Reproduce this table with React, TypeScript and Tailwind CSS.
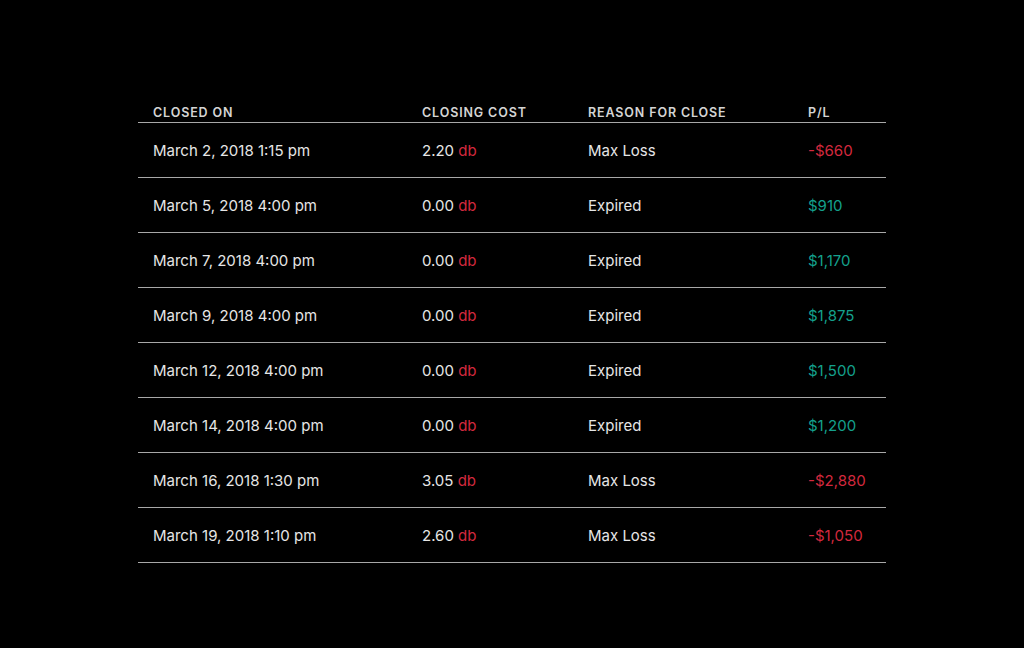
import React from "react";

type Row = { date: string; cost: string; reason: string; pl: string; neg: boolean };

const rows: Row[] = [
  { date: "March 2, 2018 1:15 pm", cost: "2.20", reason: "Max Loss", pl: "-$660", neg: true },
  { date: "March 5, 2018 4:00 pm", cost: "0.00", reason: "Expired", pl: "$910", neg: false },
  { date: "March 7, 2018 4:00 pm", cost: "0.00", reason: "Expired", pl: "$1,170", neg: false },
  { date: "March 9, 2018 4:00 pm", cost: "0.00", reason: "Expired", pl: "$1,875", neg: false },
  { date: "March 12, 2018 4:00 pm", cost: "0.00", reason: "Expired", pl: "$1,500", neg: false },
  { date: "March 14, 2018 4:00 pm", cost: "0.00", reason: "Expired", pl: "$1,200", neg: false },
  { date: "March 16, 2018 1:30 pm", cost: "3.05", reason: "Max Loss", pl: "-$2,880", neg: true },
  { date: "March 19, 2018 1:10 pm", cost: "2.60", reason: "Max Loss", pl: "-$1,050", neg: true },
];

export default function App() {
  return (
    <div
      className="w-[1024px] h-[648px] bg-black pt-[105px] pl-[138px]"
      style={{ fontFamily: "Inter, 'Liberation Sans', sans-serif" }}
    >
      <div className="w-[748px]">
        <div className="flex border-b border-[#a8a8a8] pb-[1px] text-[12.5px] leading-[16px] font-semibold tracking-[0.07em] text-[#d4d4d4] uppercase">
          <div className="w-[269px] pl-[15px]">Closed On</div>
          <div className="w-[166px] pl-[15px]">Closing Cost</div>
          <div className="w-[220px] pl-[15px]">Reason for Close</div>
          <div className="flex-1 pl-[15px]">P/L</div>
        </div>
        {rows.map((r) => (
          <div
            key={r.date}
            className="flex items-center h-[55px] pt-[2px] border-b border-[#a8a8a8] text-[15px] text-[#e6e6e6]"
          >
            <div className="w-[269px] pl-[15px]">{r.date}</div>
            <div className="w-[166px] pl-[15px]">
              {r.cost} <span className="text-[#d3293e]">db</span>
            </div>
            <div className="w-[220px] pl-[15px]">{r.reason}</div>
            <div className={`flex-1 pl-[15px] ${r.neg ? "text-[#d3293e]" : "text-[#14a08c]"}`}>{r.pl}</div>
          </div>
        ))}
      </div>
    </div>
  );
}
